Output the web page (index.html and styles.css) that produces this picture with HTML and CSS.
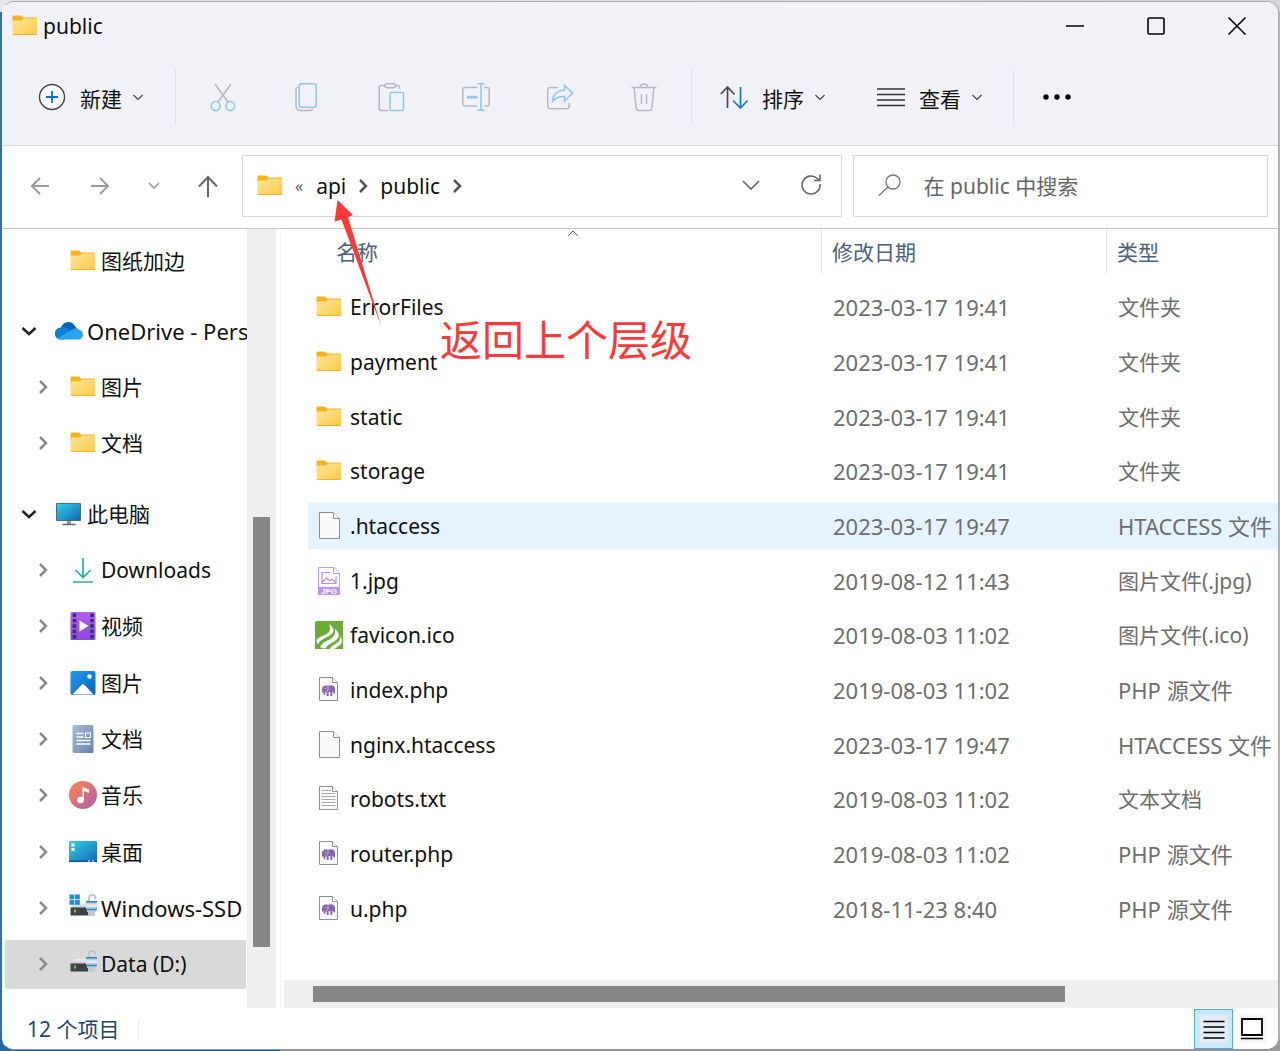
FILE: index.html
```html
<!DOCTYPE html>
<html lang="zh-CN">
<head>
<meta charset="utf-8">
<meta name="viewport" content="width=device-width, initial-scale=1">
<title>public</title>
<link rel="stylesheet" href="styles.css">
</head>
<body>
<svg class="sprite" aria-hidden="true">
  <defs>
    <linearGradient id="g-folder" x1="0" y1="0" x2="1" y2="1"><stop offset="0" stop-color="#ffe69d"/><stop offset="1" stop-color="#fdca45"/></linearGradient>
    <linearGradient id="g-screen" x1="0" y1="0" x2="1" y2="1"><stop offset="0" stop-color="#35d0e4"/><stop offset="1" stop-color="#1267b8"/></linearGradient>
    <linearGradient id="g-video" x1="0" y1="0" x2="0" y2="1"><stop offset="0" stop-color="#b45cf0"/><stop offset="1" stop-color="#8b45e0"/></linearGradient>
    <linearGradient id="g-photo" x1="0" y1="0" x2="1" y2="1"><stop offset="0" stop-color="#1c9bea"/><stop offset="1" stop-color="#0f62b4"/></linearGradient>
    <linearGradient id="g-doc" x1="0" y1="0" x2="1" y2="1"><stop offset="0" stop-color="#a9bdd6"/><stop offset="1" stop-color="#6484ae"/></linearGradient>
    <linearGradient id="g-music" x1="0" y1="0" x2="1" y2="1"><stop offset="0.3" stop-color="#e97c66"/><stop offset="1" stop-color="#a55dae"/></linearGradient>
    <linearGradient id="g-drive" x1="0" y1="0" x2="0" y2="1"><stop offset="0" stop-color="#eef0f2"/><stop offset="1" stop-color="#c3c7cc"/></linearGradient>
  </defs>
  <symbol id="folder" viewBox="0 0 28 28">
    <path d="M1.500 4.500a1 1 0 0 1 1-1h7q1 0 1.500.7L12 5.500h13a1 1 0 0 1 1 1V11H1.500z" fill="#f8b31c"/>
    <path d="M1.500 8.500h9.300L13 6.500h12a1.200 1.200 0 0 1 1.200 1.200V21.500a1 1 0 0 1-1 1H2.500a1 1 0 0 1-1-1z" fill="url(#g-folder)"/>
    <path d="M2 22.500h24" stroke="#eeb13a"/>
  </symbol>
  <symbol id="chev-right" viewBox="0 0 16 16"><path d="M5 2l6 6-6 6" fill="none" stroke="currentColor" stroke-width="2.500"/></symbol>
  <symbol id="chev-down" viewBox="0 0 16 16"><path d="M1.500 5l6.500 6 6.500-6" fill="none" stroke="currentColor" stroke-width="2.500"/></symbol>
  <symbol id="chev-thin" viewBox="0 0 16 16"><path d="M3.500 6l4.500 4.500 4.500-4.500" fill="none" stroke="currentColor" stroke-width="1.200"/></symbol>
  <symbol id="cloud" viewBox="0 0 28 28">
    <path d="M6 11C8 4 17 3 20 9l3 4-9 5z" fill="#0b63b8"/>
    <path d="M6 22.500a5.800 5.800 0 0 1-.5-12q5-1.500 9 2.500l8 8z" fill="#1180d6"/>
    <path d="M3 21l16-9.500q3-.8 5.300 1.200a5 5 0 0 1-1.300 9.800H7q-2.500 0-4-1.500z" fill="#2aa4ea"/>
  </symbol>
  <symbol id="pc" viewBox="0 0 28 28">
    <path d="M12 20h4v4h-4z" fill="#8b939b"/><path d="M7.500 24.500h13" stroke="#5d6872" stroke-width="1.500"/>
    <path d="M1.500 3.500h24v17h-24z" fill="url(#g-screen)" stroke="#456c86"/>
  </symbol>
  <symbol id="download" viewBox="0 0 28 28"><path d="M14 2v19M6.500 14l7.500 7.500 7.500-7.500M4 26h20" fill="none" stroke="#22b397" stroke-width="1.700"/></symbol>
  <symbol id="video" viewBox="0 0 28 28">
    <rect x="1.500" width="25" height="28" rx="1.500" fill="url(#g-video)"/>
    <path d="M5.500 1.500v26M23 1.500v26" stroke="#2c3562" stroke-width="3.400" stroke-dasharray="3.400 2"/>
    <path d="M10.500 8.500l9 5.500-9 5.500z" fill="#fff"/>
  </symbol>
  <symbol id="photo" viewBox="0 0 28 28">
    <rect x="1.500" y="2" width="25" height="24" rx="2" fill="url(#g-photo)"/>
    <circle cx="20.500" cy="7.500" r="2.200" fill="#fff"/><path d="M3.500 25.500L13 15.500q1-1 2 0l9.500 10z" fill="#fff"/>
  </symbol>
  <symbol id="docs" viewBox="0 0 28 28">
    <rect x="3.500" width="21" height="28" rx="1.500" fill="url(#g-doc)"/>
    <path d="M7.500 8.500h7M7.500 12h7M7.500 15.500h14M7.500 19h14" stroke="#fff" stroke-width="1.500"/><path d="M16.500 8h5v4.500h-5z" fill="none" stroke="#fff" stroke-width="1.200"/>
  </symbol>
  <symbol id="music" viewBox="0 0 28 28">
    <circle cx="14" cy="14" r="14" fill="url(#g-music)"/><circle cx="11.500" cy="19" r="3.200" fill="#fff"/>
    <path d="M13.500 19V6l6.500 2.500V12l-5-2v9z" fill="#fff"/>
  </symbol>
  <symbol id="desktop" viewBox="0 0 28 28">
    <path d="M1 3h26a1 1 0 0 1 1 1v20H0V4a1 1 0 0 1 1-1z" fill="url(#g-screen)"/><path d="M0 23.300h28" stroke="#164f91" stroke-width="1.500"/>
    <path d="M2.500 5.500h3v3h-3zM2.500 10h3v3h-3z" fill="#fff"/><path d="M19 23h2M23 23h2" stroke="#fff"/>
  </symbol>
  <symbol id="drive" viewBox="0 0 28 28">
    <path d="M6 9h16l4 5H1.500z" fill="url(#g-drive)"/><path d="M1.500 13.500h18v8h-18z" fill="#3e4145"/>
    <path d="M5 15.500h2v3h-2z" fill="#6fd321"/>
    <path d="M20 8V4a3.200 3.200 0 0 1 6.400 0v1.500" fill="none" stroke="#bcc5d0" stroke-width="1.800"/>
    <path d="M17 7h11v9h-1v2h-1v4h-7v-4h-1v-2h-1z" fill="#c4cbd6"/><path d="M17 7.800h11M17 15.500h11" stroke="#168bd4" stroke-width="1.500"/><path d="M17 11.500h11" stroke="#edf2f7" stroke-width="2"/>
  </symbol>
  <symbol id="blank-file" viewBox="0 0 28 28">
    <path d="M4.500.500h14l6 6V26.500h-20z" fill="#fafafa" stroke="#8e8e8e"/><path d="M18.500.500v6h6" fill="#fff" stroke="#8e8e8e"/>
  </symbol>
  <symbol id="small-file" viewBox="0 0 28 28">
    <path d="M4.500 1.500h13l5 5v18h-18z" fill="#fafafa" stroke="#8e8e8e"/><path d="M17.500 1.500v5h5" fill="#fff" stroke="#8e8e8e"/>
  </symbol>
  <symbol id="text-file" viewBox="0 0 28 28">
    <use href="#small-file"/><path d="M6.500 5.500h10M6.500 8.500h14M6.500 11.500h14M6.500 14.500h14M6.500 17.500h14M6.500 20.500h14" stroke="#aaa"/>
  </symbol>
  <symbol id="php-file" viewBox="0 0 28 28">
    <use href="#small-file"/>
    <path d="M7 13c0-3 3-4.200 6-3.200 3-1.200 7-.6 7 3v4.700h-1.700V16h-1v4h-2v-4h-1.600v4h-2v-3.500h-1.500V19H8.700v-2.500H7z" fill="#8b66ae"/><path d="M10 12.500h.9M13 10.500v3q0 1.500-1.500 2" fill="none" stroke="#dccbea" stroke-width=".8"/>
  </symbol>
  <symbol id="jpg-file" viewBox="0 0 28 28">
    <path d="M3.500.5h15.500l5.500 5.500v21.500h-21zM18.500.5v6h6" fill="#fff" stroke="#c29af0"/>
    <path d="M15 5.500H7v11h14v-7M7.500 15l4-4 3 3 2.500-2 3.500 3.500" fill="none" stroke="#bd86f2" stroke-width="1.200"/>
    <path d="M3 20h22v8H3z" fill="#bd93ec"/><text x="14" y="27" text-anchor="middle" class="jpg-tag">JPG</text>
  </symbol>
  <symbol id="favicon-file" viewBox="0 0 28 28">
    <path d="M2 0h26v28H0V2q0-2 2-2z" fill="#69ac36"/>
    <path d="M1.500 19c4.500-5 11-4.500 13-9 1-2.500 0-4.500 0-7 5 4 5.500 8 1 11-4 3-10 3.500-12.500 9.500q-2-2-1.500-4.500zM5 26c3-6 9-6 13-10 2-2 2.500-5 2-8 5 4 5 8 .5 11.500-3 2.500-8 3.500-10 8q-3.500 0-5.500-1.500zM15 28c1.500-4 7-5 9-8 1-1.500 1.500-3 1-5 2.500 3 3 7-.5 9.500-2 1.500-4 2-5 3.500z" fill="#fff"/>
  </symbol>
</svg>

<div class="window">
  <header class="chrome">
    <div class="titlebar">
      <svg class="icon"><use href="#folder"/></svg>
      <h1 class="title">public</h1>
      <div class="window-controls">
        <button type="button" aria-label="最小化"><svg class="ctl" viewBox="0 0 20 20"><path d="M1 10h18"/></svg></button>
        <button type="button" aria-label="最大化"><svg class="ctl" viewBox="0 0 20 20"><rect x="2" y="2" width="16" height="16" rx="1.500"/></svg></button>
        <button type="button" aria-label="关闭"><svg class="ctl" viewBox="0 0 20 20"><path d="M1.500 1.500l17 17M18.500 1.500l-17 17"/></svg></button>
      </div>
    </div>
    <div class="toolbar">
      <button type="button" class="tool new"><svg class="icon" viewBox="0 0 28 28"><circle cx="14" cy="14" r="12.500" fill="#fafbfd" stroke="#444" stroke-width="1.400"/><path d="M14 8v12M8 14h12" stroke="#0a74cc" stroke-width="1.800"/></svg><span>新建</span><svg class="mini"><use href="#chev-thin"/></svg></button>
      <div class="actions">
        <button type="button" aria-label="剪切"><svg class="icon dim" viewBox="0 0 28 28"><path d="M6 1l13 18M22 1L9 19"/><g class="blue"><circle cx="6.700" cy="23" r="4.400"/><circle cx="21.300" cy="23" r="4.400"/></g></svg></button>
        <button type="button" aria-label="复制"><svg class="icon dim" viewBox="0 0 28 28"><path d="M4.500 4q-1.500 1-1.500 3v15.500q0 5 5 5h8q3 0 4-1.500"/><rect class="blue" x="6.200" y=".8" width="17" height="23.500" rx="2.500"/></svg></button>
        <button type="button" aria-label="粘贴"><svg class="icon dim" viewBox="0 0 28 28"><path d="M8 2.500H4.200q-2 0-2 2v21q0 2 2 2H11M19 2.500h2.500q1 0 1 2V6"/><rect x="8" y=".8" width="10.500" height="4" rx="2"/><rect class="blue" x="13" y="9.500" width="13.500" height="18" rx="1.500"/></svg></button>
        <button type="button" aria-label="重命名"><svg class="icon dim" viewBox="0 0 28 28"><path d="M15.500 4.500H3q-2.200 0-2.200 2.200v14q0 2.200 2.200 2.200h12.500M22.500 4.500h2.700q2 0 2 2.200v14q0 2.200-2 2.200h-2.700"/><path class="blue" d="M15.500.8h7M19 .8v26.400M15.500 27.200h7"/><path class="blue thick" d="M5 14.200h10.500"/></svg></button>
        <button type="button" aria-label="共享"><svg class="icon dim" viewBox="0 0 28 28"><path d="M12 4.500H4.700q-3 0-3 3v15.200q0 3 3 3h15.600q3 0 3-3V20"/><path class="blue" d="M18.500 2.200l8 8-8 8v-4.700q-7.500-.5-12 5 .5-10.500 12-11.500z"/></svg></button>
        <button type="button" aria-label="删除"><svg class="icon dim" viewBox="0 0 28 28"><path d="M1.500 4.500h25M10 4.500q.3-3.500 4-3.500t4 3.500M4 4.500l2.200 20.700q.3 2.200 2.500 2.200h10.600q2.200 0 2.500-2.200L24 4.500M11.500 11v10M16.500 11v10"/></svg></button>
      </div>
      <button type="button" class="tool sort"><svg class="icon" viewBox="0 0 28 28" fill="none" stroke-width="1.700"><path d="M7.500 25V4M.8 11l6.700-7 7 7.500" stroke="#4b4b4b"/><path d="M20.500 4v21M13 17.500l7.500 7.500 7-7.500" stroke="#0a7cd6"/></svg><span>排序</span><svg class="mini"><use href="#chev-thin"/></svg></button>
      <button type="button" class="tool view"><svg class="icon" viewBox="0 0 28 28"><path d="M0 6h28M0 11.500h28M0 17h28M0 22.500h28" stroke="#333" stroke-width="1.300"/></svg><span>查看</span><svg class="mini"><use href="#chev-thin"/></svg></button>
      <button type="button" class="more" aria-label="查看更多"><svg class="icon" viewBox="0 0 28 28"><circle cx="3" cy="14" r="2.700"/><circle cx="14" cy="14" r="2.700"/><circle cx="25" cy="14" r="2.700"/></svg></button>
    </div>
  </header>

  <nav class="navbar" aria-label="导航">
    <div class="history">
      <button type="button" aria-label="后退"><svg class="nav-icon faded" viewBox="0 0 20 20"><path d="M19 10H2M10 2l-8 8 8 8"/></svg></button>
      <button type="button" aria-label="前进"><svg class="nav-icon faded" viewBox="0 0 20 20"><path d="M1 10h17M10 2l8 8-8 8"/></svg></button>
      <button type="button" aria-label="最近"><svg class="nav-icon faded slim" viewBox="0 0 20 20"><path d="M5 7l5 5 5-5"/></svg></button>
      <button type="button" aria-label="上移"><svg class="nav-icon" viewBox="0 0 20 20"><path d="M10 21V1M1 10.500L10 1l9 9.500"/></svg></button>
    </div>
    <div class="address">
      <svg class="icon"><use href="#folder"/></svg>
      <span class="overflow">«</span>
      <a href="#api">api</a>
      <svg class="mini crumb"><use href="#chev-right"/></svg>
      <a href="#public">public</a>
      <svg class="mini crumb"><use href="#chev-right"/></svg>
      <button type="button" class="history-list" aria-label="历史位置"><svg class="nav-icon slim" viewBox="0 0 20 20"><path d="M2 5l8 8 8-8"/></svg></button>
      <button type="button" aria-label="刷新"><svg class="nav-icon slim" viewBox="0 0 20 20"><path d="M19 8a9 9 0 1 1-2.600-5.400L19 4.500M19-1.500v6h-6"/></svg></button>
    </div>
    <label class="search">
      <svg class="nav-icon search-icon" viewBox="0 0 20 20"><circle cx="13" cy="6" r="7"/><path d="M8 11l-9 8.500"/></svg>
      <input type="search" placeholder="在 public 中搜索" aria-label="在 public 中搜索">
    </label>
  </nav>

  <div class="content">
    <aside class="sidebar">
      <ul class="tree">
        <li><a href="#f1"><svg class="mini"></svg><svg class="icon"><use href="#folder"/></svg>图纸加边</a></li>
        <li class="root"><a href="#onedrive" class="latin"><svg class="mini"><use href="#chev-down"/></svg><svg class="icon"><use href="#cloud"/></svg>OneDrive - Pers</a></li>
        <li><a href="#f2"><svg class="mini"><use href="#chev-right"/></svg><svg class="icon"><use href="#folder"/></svg>图片</a></li>
        <li><a href="#f3"><svg class="mini"><use href="#chev-right"/></svg><svg class="icon"><use href="#folder"/></svg>文档</a></li>
        <li class="root"><a href="#pc-root"><svg class="mini"><use href="#chev-down"/></svg><svg class="icon"><use href="#pc"/></svg>此电脑</a></li>
        <li><a href="#f4"><svg class="mini"><use href="#chev-right"/></svg><svg class="icon"><use href="#download"/></svg>Downloads</a></li>
        <li><a href="#f5"><svg class="mini"><use href="#chev-right"/></svg><svg class="icon"><use href="#video"/></svg>视频</a></li>
        <li><a href="#f6"><svg class="mini"><use href="#chev-right"/></svg><svg class="icon"><use href="#photo"/></svg>图片</a></li>
        <li><a href="#f7"><svg class="mini"><use href="#chev-right"/></svg><svg class="icon"><use href="#docs"/></svg>文档</a></li>
        <li><a href="#f8"><svg class="mini"><use href="#chev-right"/></svg><svg class="icon"><use href="#music"/></svg>音乐</a></li>
        <li><a href="#f9"><svg class="mini"><use href="#chev-right"/></svg><svg class="icon"><use href="#desktop"/></svg>桌面</a></li>
        <li><a href="#f10" class="latin"><svg class="mini"><use href="#chev-right"/></svg><svg class="icon" viewBox="0 0 28 28"><use href="#drive"/><path d="M.5.500h4.800v4.800H.5zM6 .500h4.800v4.800H6zM.5 6h4.800v4.800H.5zM6 6h4.800v4.800H6z" fill="#148fdd"/></svg>Windows-SSD</a></li>
        <li class="selected"><a href="#f11"><svg class="mini"><use href="#chev-right"/></svg><svg class="icon"><use href="#drive"/></svg>Data (D:)</a></li>
      </ul>
      <div class="vscroll"><div class="vthumb"></div></div>
    </aside>

    <main class="files">
      <table>
        <thead>
          <tr><th class="col-name">名称<svg class="sort-mark" viewBox="0 0 12 8"><path d="M1 7l5-5 5 5"/></svg></th><th class="col-date">修改日期</th><th>类型</th></tr>
        </thead>
        <tbody>
          <tr><td><span class="file"><svg class="icon"><use href="#folder"/></svg>ErrorFiles</span></td><td>2023-03-17 19:41</td><td>文件夹</td></tr>
          <tr><td><span class="file"><svg class="icon"><use href="#folder"/></svg>payment</span></td><td>2023-03-17 19:41</td><td>文件夹</td></tr>
          <tr><td><span class="file"><svg class="icon"><use href="#folder"/></svg>static</span></td><td>2023-03-17 19:41</td><td>文件夹</td></tr>
          <tr><td><span class="file"><svg class="icon"><use href="#folder"/></svg>storage</span></td><td>2023-03-17 19:41</td><td>文件夹</td></tr>
          <tr class="hover"><td><span class="file"><svg class="icon"><use href="#blank-file"/></svg>.htaccess</span></td><td>2023-03-17 19:47</td><td class="latin">HTACCESS 文件</td></tr>
          <tr><td><span class="file"><svg class="icon"><use href="#jpg-file"/></svg>1.jpg</span></td><td>2019-08-12 11:43</td><td>图片文件(.jpg)</td></tr>
          <tr><td><span class="file"><svg class="icon"><use href="#favicon-file"/></svg>favicon.ico</span></td><td>2019-08-03 11:02</td><td>图片文件(.ico)</td></tr>
          <tr><td><span class="file"><svg class="icon"><use href="#php-file"/></svg>index.php</span></td><td>2019-08-03 11:02</td><td class="latin">PHP 源文件</td></tr>
          <tr><td><span class="file"><svg class="icon"><use href="#blank-file"/></svg>nginx.htaccess</span></td><td>2023-03-17 19:47</td><td class="latin">HTACCESS 文件</td></tr>
          <tr><td><span class="file"><svg class="icon"><use href="#text-file"/></svg>robots.txt</span></td><td>2019-08-03 11:02</td><td>文本文档</td></tr>
          <tr><td><span class="file"><svg class="icon"><use href="#php-file"/></svg>router.php</span></td><td>2019-08-03 11:02</td><td class="latin">PHP 源文件</td></tr>
          <tr><td><span class="file"><svg class="icon"><use href="#php-file"/></svg>u.php</span></td><td>2018-11-23 8:40</td><td class="latin">PHP 源文件</td></tr>
        </tbody>
      </table>
      <div class="hscroll"><div class="hthumb"></div></div>
    </main>
  </div>

  <footer class="status">
    <span class="count">12 个项目</span>
    <div class="views">
      <button type="button" class="active" aria-label="详细信息"><svg class="icon" viewBox="0 0 28 28"><rect width="28" height="28" rx="2" fill="#e2edf5"/><path d="M3.500 6.500h21M3.500 12h21M3.500 17.500h21M3.500 23h21" stroke="#000" stroke-width="1.700"/></svg></button>
      <button type="button" aria-label="大图标"><svg class="icon" viewBox="0 0 28 28"><rect width="28" height="28" rx="2" fill="#f5f5f5"/><path d="M3 4h20v16H3z" fill="#fff" stroke="#000" stroke-width="1.800"/><path d="M2 23.500h22" stroke="#000" stroke-width="1.700"/></svg></button>
    </div>
  </footer>

  <div class="note">
    <svg class="arrow" viewBox="0 0 48 128"><path d="M3.500 0L19 15l-5 2.200L47.500 127 7.500 19.500.5 21.500z"/></svg>
    <span class="note-text">返回上个层级</span>
  </div>
</div>
</body>
</html>
```
FILE: styles.css
```css
* { box-sizing: border-box; }

body {
  margin: 0;
  min-height: 100vh;
  display: flex;
  padding: 1px 1px 1px 2px;
  font: 21px/28px "Noto Sans", "Noto Sans CJK SC", sans-serif;
  color: #111;
  background:
    linear-gradient(90deg, #1f69a5 280px, #9a9a9a 280px) bottom / 100% 12px no-repeat,
    linear-gradient(90deg, #e3e5e8, #d5d5d5) top / 100% 12px no-repeat,
    linear-gradient(90deg, #2e75ae 50%, #b8b8b8 50%);
}

button { border: 0; padding: 0; background: none; font: inherit; color: inherit; display: flex; flex: none; align-items: center; justify-content: center; }
a { color: inherit; text-decoration: none; }
svg { flex: none; display: block; overflow: visible; }

.sprite { position: absolute; width: 0; height: 0; }
.icon { width: 28px; height: 28px; }
.mini { width: 16px; height: 16px; }
.latin { font-size: 22px; }
.jpg-tag { font: bold 8px "Liberation Sans", sans-serif; fill: #fff; }

.window {
  position: relative;
  flex: 1;
  min-width: 0;
  display: flex;
  flex-direction: column;
  overflow: hidden;
  background: #fff;
  border: 1px solid;
  border-color: #a8a8a8 #a8a8a8 #8f8f8f #f4f7fa;
  border-radius: 12px;
}

/* Title bar and command bar */
.chrome { background: #f1f2f8; border-bottom: 1px solid #d9dbe1; }
.titlebar { display: flex; align-items: center; height: 47px; padding: 0 1px 0 8px; }
.title { flex: 1; margin: 0 0 0 4px; font-size: 21px; line-height: 28px; font-weight: 400; }
.window-controls { display: flex; }
.window-controls button { width: 81px; height: 47px; }
.ctl { width: 20px; height: 20px; fill: none; stroke: #000; stroke-width: 1.6; }

.toolbar { display: flex; height: 96px; padding: 20px 0; align-items: stretch; }
.tool { gap: 14px; border-right: 1px solid #dfe1e8; }
.tool span { padding-top: 3px; }
.tool .mini { margin-left: -6px; color: #444; }
.tool.new { padding: 0 29px 0 35px; }
.tool.sort { padding: 0 29px 0 28px; border: 0; }
.tool.view { padding: 0 28px 0 20px; }
.actions { display: flex; width: 516px; padding: 0 5px; border-right: 1px solid #dfe1e8; }
.actions button { flex: 1; }
.dim { fill: none; stroke: #b7b9be; stroke-width: 1.5; }
.dim .blue { stroke: #8fc5ee; }
.dim .thick { stroke-width: 2.8; }
.more { width: 85px; }

/* Address row */
.navbar { display: grid; grid-template-columns: 239px 599fr 426fr; height: 83px; padding: 9px 10px 11px 0; border-bottom: 1px solid #c4c4c4; }
.history { display: flex; align-items: center; padding-left: 7px; }
.history button { width: 60px; height: 60px; }
.history button:nth-child(3) { width: 48px; }
.nav-icon { width: 20px; height: 20px; fill: none; stroke: #666; stroke-width: 2; }
.nav-icon.faded { stroke: #9b9b9b; }
.nav-icon.slim { stroke-width: 1.6; }
.address, .search { border: 1px solid #d9d9d9; display: flex; align-items: center; height: 62px; min-width: 0; }
.address { padding-left: 13px; }
.address button { width: 60px; height: 60px; }
.address .history-list { margin-left: auto; }
.overflow { margin: 0 13px 0 11px; font-size: 16px; color: #555; }
.crumb { margin: 0 9px; color: #555; }
.search { margin-left: 11px; padding-left: 26px; gap: 24px; }
.search-icon { stroke: #777; stroke-width: 1.3; }
.search input { flex: 1; min-width: 0; border: 0; padding: 0; outline: 0; background: none; font: inherit; color: #666; }
.search input::placeholder { color: #666; opacity: 1; }

/* Main area */
.content { flex: 1; display: flex; min-height: 0; }
.sidebar { display: flex; width: 278px; flex: none; border-right: 1px solid #f3f3f3; }
.tree { flex: 1; min-width: 0; margin: 0; padding: 7px 1px 19px 2px; list-style: none; display: flex; flex-direction: column; justify-content: space-between; }
.tree a { display: flex; align-items: center; height: 49px; padding-left: 30px; white-space: nowrap; }
.tree .mini { margin-right: 18px; color: #8a8a8a; }
.tree .icon { margin-right: 4px; }
.tree .root { margin-top: 14px; }
.tree .root a { padding-left: 16px; }
.tree .root .mini { color: #222; }
.tree .selected { background: #d9d9d9; border-radius: 2px; }
.vscroll { width: 29px; margin-right: 4px; background: #efefef; padding: 288px 6px 61px; }
.vthumb { height: 100%; background: #868686; }

.files { flex: 1; min-width: 0; display: flex; flex-direction: column; justify-content: space-between; padding-left: 3px; }
table { width: calc(100% - 24px); height: 707px; margin-left: 24px; table-layout: fixed; border-collapse: separate; border-spacing: 0; }
th { position: relative; height: 51px; padding: 0 0 6px 11px; text-align: left; font-weight: 400; color: #4c607a; }
th.col-name { width: 513px; padding-left: 28px; }
th.col-date { width: 285px; }
th:not(.col-name) { background: linear-gradient(#e5e5e5, #e5e5e5) left top / 1px 45px no-repeat; }
.sort-mark { position: absolute; left: 259px; top: 0; width: 12px; height: 8px; fill: none; stroke: #666; }
td { height: 54px; padding: 0 0 0 12px; border: solid transparent; border-width: 4px 0; background-clip: padding-box; color: #6d6d6d; white-space: nowrap; }
td:first-child { padding-left: 7px; color: #111; }
td:nth-child(2) { font-size: 22px; }
.file { display: flex; align-items: center; gap: 7px; }
.hover td { background-color: #e5f3ff; }
.hscroll { height: 28px; background: #efefef; padding: 6px 213px 6px 29px; }
.hthumb { height: 16px; background: #868686; }

/* Status bar */
.status { display: flex; justify-content: space-between; align-items: center; height: 41px; padding: 0 6px 0 24px; color: #24446f; }
.count { padding-right: 19px; line-height: 20px; border-right: 1px solid #e9e9e9; }
.views { display: flex; }
.views button { width: 39px; height: 40px; }
.views .active { background: #cce8ff; border: 1px solid #4fabe8; }

/* Callout drawn over the list */
.note { position: absolute; left: 331px; top: 198px; pointer-events: none; color: #fa3a39; }
.arrow { width: 48px; height: 128px; fill: currentColor; }
.note-text { position: absolute; left: 106px; top: 112px; font-size: 42px; line-height: 56px; white-space: nowrap; }
```
